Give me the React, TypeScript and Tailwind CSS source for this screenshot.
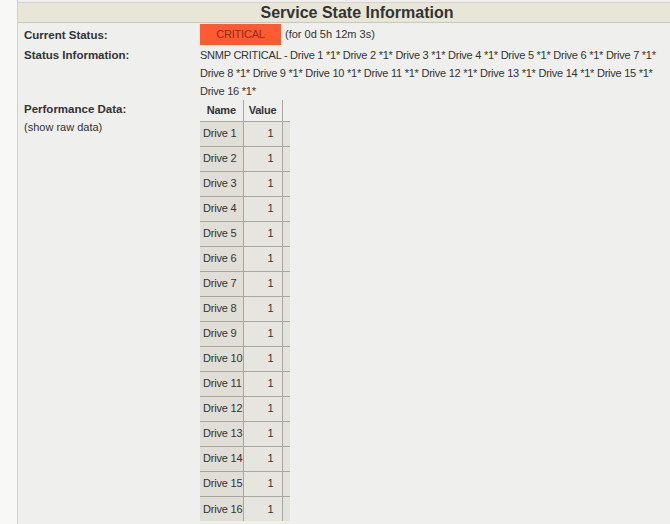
import React from "react";

const drives = Array.from({ length: 16 }, (_, i) => `Drive ${i + 1}`);

const part = (from: number, to: number) =>
  drives.slice(from, to).map((d) => `${d} *1*`).join(" ");

// status output as the plugin printed it, broken into the three rows it occupies
const statusLines = [
  "SNMP CRITICAL - " + part(0, 7),
  part(7, 15),
  part(15, 16),
];

function Label({ children, bold = true }: { children: React.ReactNode; bold?: boolean }) {
  return (
    <div
      className={`w-[176px] shrink-0 leading-[18px] text-[#333] ${
        bold ? "text-[11.5px] font-bold" : "text-[11px]"
      }`}
    >
      {children}
    </div>
  );
}

export default function App() {
  return (
    <div className="flex h-[524px] w-[670px] overflow-hidden bg-[#f8f8f6] font-['Liberation_Sans',Arial,sans-serif]">
      <div className="w-[17px] shrink-0" />
      <div className="flex-1 border-l border-[#cfcfcc] bg-[#efefed] pt-[2px]">
        <div className="h-[21px] border-t border-b border-t-[#d9cfcc] border-b-[#c9c7bb] bg-[#e8e6d7] text-center text-[16px] font-bold leading-[19px] text-[#333]">
          <span className="pl-[26px]">Service State Information</span>
        </div>

        <div className="flex flex-col pl-[6px] pt-[1px]">
          <div className="flex h-[21px] items-center">
            <Label>Current Status:</Label>
            <div className="flex h-[21px] w-[81px] items-center justify-center bg-[#fe5a34] text-[11px] tracking-[-0.2px] text-[#8c2d1a]">
              CRITICAL
            </div>
            <span className="pl-[4px] text-[11px] text-[#333]">(for 0d 5h 12m 3s)</span>
          </div>

          <div className="mt-[1px] flex">
            <Label>Status Information:</Label>
            <div className="text-[11px] leading-[18px] tracking-[-0.25px] text-[#333]">
              {statusLines.map((line) => (
                <div key={line} className="whitespace-nowrap">
                  {line}
                </div>
              ))}
            </div>
          </div>

          <div className="flex">
            <div className="w-[176px] shrink-0">
              <Label>Performance Data:</Label>
              <Label bold={false}>(show raw data)</Label>
            </div>
            <table className="table-fixed border-collapse text-[11px] tracking-[-0.2px] text-[#333]">
              <thead>
                <tr className="h-[21px]">
                  <th className="w-[43px] border-r border-[#a9a7a0] text-center font-bold">Name</th>
                  <th className="w-[39px] border-r border-[#a9a7a0] text-center font-bold">Value</th>
                  <th className="w-[8px]" />
                </tr>
              </thead>
              <tbody>
                {drives.map((d) => (
                  <tr key={d} className="h-[25px] border-t border-[#a9a7a0]">
                    <td className="whitespace-nowrap border-r border-[#a9a7a0] bg-[#e0ded6] pl-[3px] text-left">
                      {d}
                    </td>
                    <td className="border-r border-[#a9a7a0] bg-[#e7e5df] pr-[8px] text-right">1</td>
                    <td className="bg-[#e4e2dc]" />
                  </tr>
                ))}
              </tbody>
            </table>
          </div>
        </div>
      </div>
    </div>
  );
}
